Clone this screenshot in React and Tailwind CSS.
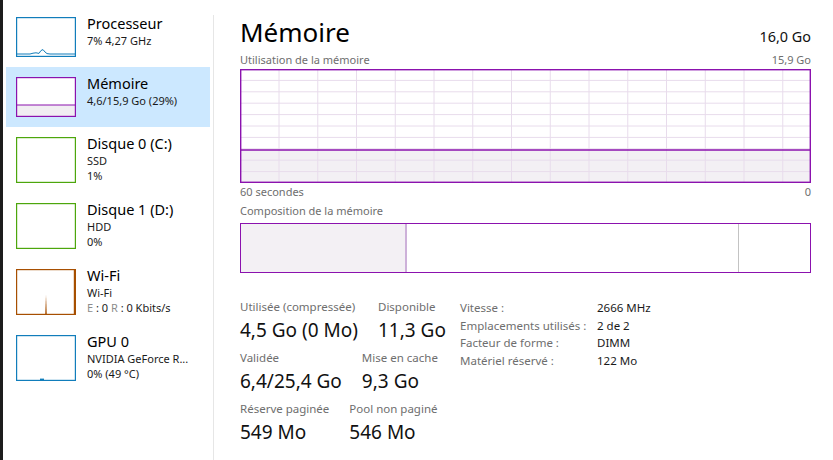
import React from "react";

const MEM = "#8b12ae";

function Thumb({ color, h, children }) {
  return (
    <svg width="60" height={h} viewBox={`0 0 60 ${h}`} className="block flex-none">
      <rect x="0" y="0" width="60" height={h} fill="#ffffff" />
      {children}
      <rect x="0.6" y="0.6" width="58.8" height={h - 1.2} fill="none" stroke={color} strokeWidth="1.2" />
    </svg>
  );
}

function SideItem({ thumb, title, lines, selected }) {
  return (
    <div className={`flex items-start pl-[10px] ${selected ? "bg-[#cce8ff]" : ""}`}>
      <div className="mt-[10px] mb-[10px]">{thumb}</div>
      <div className="ml-[11px] mt-[7px] flex flex-col whitespace-nowrap">
        <div className="text-[14.5px] leading-[19px] text-black">{title}</div>
        {lines.map((l, i) => (
          <div key={i} className="text-[11px] leading-[15px] text-[#1a1a1a]">
            {l}
          </div>
        ))}
      </div>
    </div>
  );
}

function UsageGraph() {
  const vx = [];
  for (let i = 0; i < 14; i++) vx.push(39 + 38.75 * i);
  const hy = [];
  for (let i = 1; i < 10; i++) hy.push(11.4 * i);
  return (
    <svg width="571" height="114" viewBox="0 0 571 114" className="block">
      <rect x="0" y="0" width="571" height="114" fill="#ffffff" />
      <rect x="0" y="81" width="571" height="33" fill="#f3f0f4" />
      {vx.map((x) => (
        <line key={"v" + x} x1={x} y1="0" x2={x} y2="114" stroke="#e8dcec" strokeWidth="1" />
      ))}
      {hy.map((y) => (
        <line key={"h" + y} x1="0" y1={y} x2="571" y2={y} stroke="#e8dcec" strokeWidth="1" />
      ))}
      <line x1="0" y1="81" x2="571" y2="81" stroke={MEM} strokeWidth="1.4" />
      <rect x="0.7" y="0.7" width="569.6" height="112.6" fill="none" stroke={MEM} strokeWidth="1.4" />
    </svg>
  );
}

function Stat({ label, value }) {
  return (
    <div className="flex flex-col whitespace-nowrap">
      <div className="text-[11.5px] leading-[16px] text-[#6e6e6e]">{label}</div>
      <div className="mt-[2px] text-[19px] leading-[26px] text-[#111]">{value}</div>
    </div>
  );
}

export default function App() {
  return (
    <div className="flex w-[833px] h-[460px] overflow-hidden bg-white font-['Noto_Sans',sans-serif]">
      <div className="w-[3px] flex-none bg-[#1c1c1c]" />
      {/* Sidebar */}
      <div className="w-[210px] flex-none pl-[3px] pr-[3px] pt-[7px] flex flex-col">
        <SideItem
          title="Processeur"
          lines={["7% 4,27 GHz"]}
          thumb={
            <Thumb color="#117dbb" h={40}>
              <polyline
                points="1,37 14,37 17,36.2 20,35.8 23,36.4 25,33.5 27,32.6 29,35 31,36.6 34,37 59,37"
                fill="none"
                stroke="#117dbb"
                strokeWidth="1"
              />
            </Thumb>
          }
        />
        <SideItem
          selected
          title="Mémoire"
          lines={["4,6/15,9 Go (29%)"]}
          thumb={
            <Thumb color={MEM} h={40}>
              <rect x="0" y="28" width="60" height="12" fill="#f1eef2" />
              <line x1="0" y1="28" x2="60" y2="28" stroke={MEM} strokeWidth="1.2" />
            </Thumb>
          }
        />
        <SideItem title="Disque 0 (C:)" lines={["SSD", "1%"]} thumb={<Thumb color="#4da60c" h={46} />} />
        <SideItem title="Disque 1 (D:)" lines={["HDD", "0%"]} thumb={<Thumb color="#4da60c" h={46} />} />
        <SideItem
          title="Wi-Fi"
          lines={[
            "Wi-Fi",
            <span>
              <span className="text-[#8c8c8c]">E</span> : 0 <span className="text-[#8c8c8c]">R</span> : 0 Kbits/s
            </span>,
          ]}
          thumb={
            <Thumb color="#a74f01" h={46}>
              <polygon points="29.2,45.4 30,26 30.8,45.4" fill="#a74f01" />
              <line x1="58.4" y1="0" x2="58.4" y2="46" stroke="#a74f01" strokeWidth="1.2" />
            </Thumb>
          }
        />
        <SideItem
          title="GPU 0"
          lines={["NVIDIA GeForce R...", "0%  (49 °C)"]}
          thumb={
            <Thumb color="#117dbb" h={46}>
              <rect x="24" y="43.6" width="4" height="1.4" fill="#117dbb" />
            </Thumb>
          }
        />
      </div>
      {/* divider */}
      <div className="w-px flex-none mt-[15px] bg-[#e6e6e6]" />
      {/* Main */}
      <div className="flex-1 pl-[26px] pr-[22px] pt-[16px] flex flex-col">
        <div className="flex items-baseline justify-between h-[32px]">
          <div className="text-[26px] leading-[32px] text-black">Mémoire</div>
          <div className="text-[14.4px] leading-[20px] text-[#111]">16,0 Go</div>
        </div>
        <div className="mt-[5px] flex justify-between text-[11px] leading-[14px] text-[#6e6e6e]">
          <span>Utilisation de la mémoire</span>
          <span>15,9 Go</span>
        </div>
        <div className="mt-[2px]">
          <UsageGraph />
        </div>
        <div className="mt-[2px] flex justify-between text-[11px] leading-[14px] text-[#6e6e6e]">
          <span>60 secondes</span>
          <span>0</span>
        </div>
        <div className="mt-[5px] text-[11px] leading-[14px] text-[#6e6e6e]">Composition de la mémoire</div>
        <div className="mt-[5px] h-[50px] flex border-[1.4px] border-[#8b12ae] bg-white">
          <div className="w-[164px] bg-[#f3f0f4]" />
          <div className="w-[2px] bg-[#cdb1d9]" />
          <div className="w-[331px]" />
          <div className="w-px bg-[#c3c3c3]" />
          <div className="flex-1" />
        </div>
        {/* Stats */}
        <div className="mt-[26px] flex items-start">
          <div className="w-[220px] flex-none flex flex-col gap-[7px]">
            <div className="flex gap-5">
              <Stat label="Utilisée (compressée)" value="4,5 Go (0 Mo)" />
              <Stat label="Disponible" value="11,3 Go" />
            </div>
            <div className="flex gap-5">
              <Stat label="Validée" value="6,4/25,4 Go" />
              <Stat label="Mise en cache" value="9,3 Go" />
            </div>
            <div className="flex gap-5">
              <Stat label="Réserve paginée" value="549 Mo" />
              <Stat label="Pool non paginé" value="546 Mo" />
            </div>
          </div>
          <div className="grid grid-cols-[137px_auto] text-[11.5px] leading-[17.5px] whitespace-nowrap">
            <div className="text-[#6e6e6e]">Vitesse :</div>
            <div className="text-[#1a1a1a]">2666 MHz</div>
            <div className="text-[#6e6e6e]">Emplacements utilisés :</div>
            <div className="text-[#1a1a1a]">2 de 2</div>
            <div className="text-[#6e6e6e]">Facteur de forme :</div>
            <div className="text-[#1a1a1a]">DIMM</div>
            <div className="text-[#6e6e6e]">Matériel réservé :</div>
            <div className="text-[#1a1a1a]">122 Mo</div>
          </div>
        </div>
      </div>
    </div>
  );
}
